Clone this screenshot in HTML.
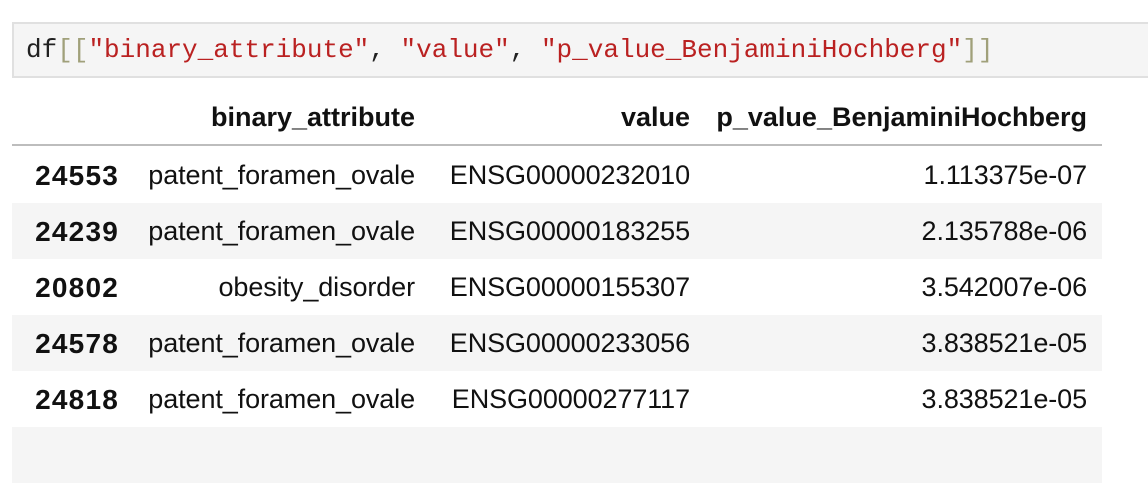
<!DOCTYPE html>
<html><head><style>
body{margin:0;width:1148px;height:438px;background:#fff;overflow:hidden;position:relative;font-family:"Liberation Sans",Arial,sans-serif;}
.code{position:absolute;left:12px;top:22px;width:1150px;height:56px;background:#f5f5f5;border:2px solid #e0e0e0;box-sizing:border-box;}
.code pre{margin:0;position:absolute;left:12px;top:11px;font-family:"Liberation Mono",monospace;font-size:26px;color:#212121;}
.s{color:#ba2121}.b{color:#a0a07a}
.hdr{position:absolute;left:12px;top:100px;width:1090px;height:46px;border-bottom:2px solid #bdbdbd;box-sizing:border-box;}
.row{position:absolute;left:12px;width:1090px;height:56px;}
.g{background:#f5f5f5}
.c{position:absolute;font-size:27px;color:#111;white-space:nowrap;text-align:right;line-height:27px;letter-spacing:-0.1px}
.h .c{font-weight:bold;letter-spacing:0}
.idx{font-weight:bold;letter-spacing:1.2px;font-size:28px}
</style></head><body>
<div class="code"><pre>df<span class="b">[[</span><span class="s">"binary_attribute"</span>, <span class="s">"value"</span>, <span class="s">"p_value_BenjaminiHochberg"</span><span class="b">]]</span></pre></div>
<div class="hdr h">
<div class="c" style="right:687px;top:4px">binary_attribute</div>
<div class="c" style="right:412px;top:4px">value</div>
<div class="c" style="right:15px;top:4px">p_value_BenjaminiHochberg</div>
</div>
<div class="row" style="top:147px">
<div class="c idx" style="right:983px;top:15px">24553</div><div class="c" style="right:687px;top:15px">patent_foramen_ovale</div><div class="c" style="right:412px;top:15px">ENSG00000232010</div><div class="c" style="right:15px;top:15px">1.113375e-07</div></div>
<div class="row g" style="top:203px">
<div class="c idx" style="right:983px;top:15px">24239</div><div class="c" style="right:687px;top:15px">patent_foramen_ovale</div><div class="c" style="right:412px;top:15px">ENSG00000183255</div><div class="c" style="right:15px;top:15px">2.135788e-06</div></div>
<div class="row" style="top:259px">
<div class="c idx" style="right:983px;top:15px">20802</div><div class="c" style="right:687px;top:15px">obesity_disorder</div><div class="c" style="right:412px;top:15px">ENSG00000155307</div><div class="c" style="right:15px;top:15px">3.542007e-06</div></div>
<div class="row g" style="top:315px">
<div class="c idx" style="right:983px;top:15px">24578</div><div class="c" style="right:687px;top:15px">patent_foramen_ovale</div><div class="c" style="right:412px;top:15px">ENSG00000233056</div><div class="c" style="right:15px;top:15px">3.838521e-05</div></div>
<div class="row" style="top:371px">
<div class="c idx" style="right:983px;top:15px">24818</div><div class="c" style="right:687px;top:15px">patent_foramen_ovale</div><div class="c" style="right:412px;top:15px">ENSG00000277117</div><div class="c" style="right:15px;top:15px">3.838521e-05</div></div>
<div class="row g" style="top:427px"></div>
</body></html>
